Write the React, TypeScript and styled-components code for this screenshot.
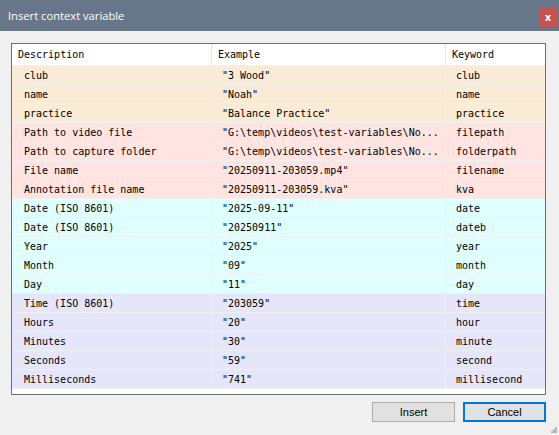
import React from "react";
import styled, { createGlobalStyle } from "styled-components";

const GlobalStyle = createGlobalStyle`
  html, body { margin: 0; padding: 0; background: #f0f0f0; overflow: hidden; }
  * { box-sizing: border-box; }
`;

const Window = styled.div`
  position: relative;
  width: 559px;
  height: 435px;
  background: #f0f0f0;
  display: flex;
  flex-direction: column;
`;

const TitleBar = styled.div`
  height: 31px;
  background: #687689;
  display: flex;
  align-items: flex-start;
  justify-content: space-between;
  padding: 0 2px 0 8px;
`;

const Title = styled.span`
  font-family: "Open Sans", "Liberation Sans", sans-serif;
  font-size: 11.2px;
  line-height: 31px;
  color: #ffffff;
`;

const CloseButton = styled.div`
  margin-top: 8px;
  width: 18px;
  height: 19px;
  background: #c75050;
  color: #ffffff;
  font-family: "DejaVu Sans", sans-serif;
  font-weight: bold;
  font-size: 10px;
  display: flex;
  align-items: center;
  justify-content: center;
`;

const Content = styled.div`
  padding: 12px 13px 0 11px;
  display: flex;
  flex-direction: column;
`;

const Grid = styled.div`
  height: 352px;
  border: 1px solid #6e6e6e;
  background: #ffffff;
  display: grid;
  grid-template-columns: 200px 234px 99px;
  grid-auto-rows: 19px;
  grid-template-rows: 22px;
  align-content: start;
  font-family: "DejaVu Sans Mono", "Liberation Mono", monospace;
  font-size: 10px;
  color: #000;
`;

const HeaderCell = styled.div<{ $last?: boolean }>`
  background: #ffffff;
  border-right: ${(p) => (p.$last ? "none" : "1px solid #e5e5e5")};
  border-bottom: 1px solid #f0f0f0;
  padding-left: 6px;
  display: flex;
  align-items: center;
  white-space: nowrap;
`;

const Cell = styled.div<{ $bg: string; $pad: number; $last?: boolean }>`
  background: ${(p) => p.$bg};
  border-right: ${(p) => (p.$last ? "none" : "1px solid #f0f0f0")};
  border-bottom: 1px solid #f0f0f0;
  padding-left: ${(p) => p.$pad}px;
  display: flex;
  align-items: center;
  white-space: nowrap;
  overflow: hidden;
`;

const Footer = styled.div`
  margin-top: 7px;
  display: flex;
  justify-content: flex-end;
  gap: 8px;
`;

const Button = styled.button<{ $focused?: boolean }>`
  width: 83px;
  height: 20px;
  background: #e1e1e1;
  border: ${(p) => (p.$focused ? "2px solid #0078d7" : "1px solid #adadad")};
  font-family: "Liberation Sans", Arial, sans-serif;
  font-size: 11px;
  color: #000;
  padding: 0;
  display: flex;
  align-items: center;
  justify-content: center;
`;

const Grip = styled.svg`
  position: absolute;
  right: 2px;
  bottom: 2px;
`;

const PEACH = "#faebd7";
const PINK = "#ffe4e1";
const CYAN = "#e0ffff";
const LAV = "#e6e6fa";

const rows: [string, string, string, string][] = [
  ["club", '"3 Wood"', "club", PEACH],
  ["name", '"Noah"', "name", PEACH],
  ["practice", '"Balance Practice"', "practice", PEACH],
  ["Path to video file", '"G:\\temp\\videos\\test-variables\\No...', "filepath", PINK],
  ["Path to capture folder", '"G:\\temp\\videos\\test-variables\\No...', "folderpath", PINK],
  ["File name", '"20250911-203059.mp4"', "filename", PINK],
  ["Annotation file name", '"20250911-203059.kva"', "kva", PINK],
  ["Date (ISO 8601)", '"2025-09-11"', "date", CYAN],
  ["Date (ISO 8601)", '"20250911"', "dateb", CYAN],
  ["Year", '"2025"', "year", CYAN],
  ["Month", '"09"', "month", CYAN],
  ["Day", '"11"', "day", CYAN],
  ["Time (ISO 8601)", '"203059"', "time", LAV],
  ["Hours", '"20"', "hour", LAV],
  ["Minutes", '"30"', "minute", LAV],
  ["Seconds", '"59"', "second", LAV],
  ["Milliseconds", '"741"', "millisecond", LAV],
];

export default function App() {
  return (
    <>
      <GlobalStyle />
      <Window>
        <TitleBar>
          <Title>Insert context variable</Title>
          <CloseButton>x</CloseButton>
        </TitleBar>
        <Content>
          <Grid>
            <HeaderCell>Description</HeaderCell>
            <HeaderCell>Example</HeaderCell>
            <HeaderCell $last>Keyword</HeaderCell>
            {rows.map(([d, e, k, bg], i) => (
              <React.Fragment key={i}>
                <Cell $bg={bg} $pad={12}>{d}</Cell>
                <Cell $bg={bg} $pad={10}>{e}</Cell>
                <Cell $bg={bg} $pad={10} $last>{k}</Cell>
              </React.Fragment>
            ))}
          </Grid>
          <Footer>
            <Button>Insert</Button>
            <Button $focused>Cancel</Button>
          </Footer>
        </Content>
        <Grip width="6" height="6" viewBox="0 0 6 6">
          <rect x="4" y="0" width="2" height="2" fill="#b8b8b8" />
          <rect x="2" y="2" width="2" height="2" fill="#b8b8b8" />
          <rect x="4" y="2" width="2" height="2" fill="#b8b8b8" />
          <rect x="0" y="4" width="2" height="2" fill="#b8b8b8" />
          <rect x="2" y="4" width="2" height="2" fill="#b8b8b8" />
          <rect x="4" y="4" width="2" height="2" fill="#b8b8b8" />
        </Grip>
      </Window>
    </>
  );
}
